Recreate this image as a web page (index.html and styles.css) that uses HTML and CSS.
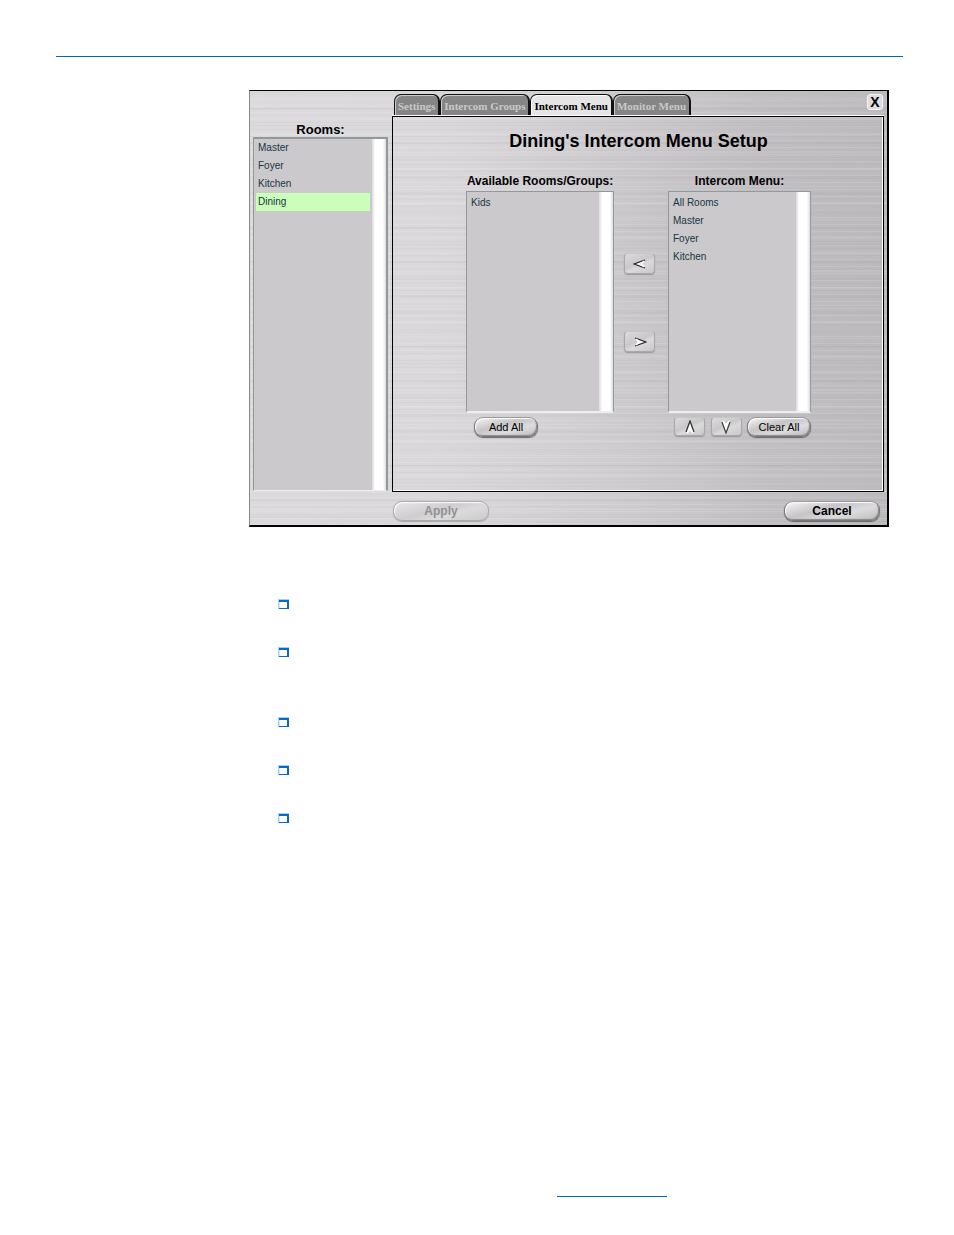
FILE: index.html
```html
<!DOCTYPE html>
<html lang="en">
<head>
<meta charset="utf-8">
<title>Intercom Menu Setup</title>
<link rel="stylesheet" href="styles.css">
</head>
<body>
<div class="page">
  <hr class="top-rule">
  <main class="content">
    <section class="window" aria-label="Intercom setup">
      <aside class="sidebar">
        <label class="list-label" for="rooms">Rooms:</label>
        <select class="listbox" id="rooms" size="4">
          <option>Master</option>
          <option>Foyer</option>
          <option>Kitchen</option>
          <option selected>Dining</option>
        </select>
      </aside>
      <div class="main">
        <div class="titlebar">
          <nav class="tabs">
            <button class="tab">Settings</button>
            <button class="tab">Intercom Groups</button>
            <button class="tab tab-active">Intercom Menu</button>
            <button class="tab">Monitor Menu</button>
          </nav>
          <button class="close">X</button>
        </div>
        <div class="panel">
          <h1 class="title">Dining's Intercom Menu Setup</h1>
          <div class="transfer">
            <div class="column">
              <label class="list-label" for="available">Available Rooms/Groups:</label>
              <select class="listbox" id="available" size="4">
                <option>Kids</option>
              </select>
              <div class="actions actions-left">
                <button class="pill">Add All</button>
              </div>
            </div>
            <div class="movers">
              <button class="arrow" aria-label="Move left">
                <svg width="14" height="10" viewBox="0 0 14 10"><path d="M12 1L9 5L12 9L3 5Z" fill="#fff"/><path d="M12 1L1 5L12 9" fill="none" stroke="#222" stroke-width="1.2"/><path d="M11 2L8 5L11 8" fill="none" stroke="#fff" stroke-width="1.5"/></svg>
              </button>
              <button class="arrow" aria-label="Move right">
                <svg width="14" height="10" viewBox="0 0 14 10"><path d="M2 1L5 5L2 9L11 5Z" fill="#fff"/><path d="M2 1L13 5L2 9" fill="none" stroke="#222" stroke-width="1.2"/><path d="M3 2L6 5L3 8" fill="none" stroke="#fff" stroke-width="1.5"/></svg>
              </button>
            </div>
            <div class="column">
              <label class="list-label" for="menu">Intercom Menu:</label>
              <select class="listbox" id="menu" size="4">
                <option>All Rooms</option>
                <option>Master</option>
                <option>Foyer</option>
                <option>Kitchen</option>
              </select>
              <div class="actions actions-right">
                <button class="arrow" aria-label="Move up">
                  <svg width="10" height="14" viewBox="0 0 10 14"><path d="M1 13L5 9L9 13L5 2Z" fill="#fff"/><path d="M1 12L5 1L9 12" fill="none" stroke="#333" stroke-width="1.3"/><path d="M5 6V10L2 13M5 9L8 13" fill="none" stroke="#fff" stroke-width="1.5"/></svg>
                </button>
                <button class="arrow" aria-label="Move down">
                  <svg width="10" height="14" viewBox="0 0 10 14"><path d="M1 1L5 5L9 1L5 12Z" fill="#fff"/><path d="M1 2L5 13L9 2" fill="none" stroke="#444" stroke-width="1.3"/><path d="M2 1L5 5V9M5 5L8 1" fill="none" stroke="#fff" stroke-width="1.5"/></svg>
                </button>
                <button class="pill">Clear All</button>
              </div>
            </div>
          </div>
        </div>
      </div>
      <div class="window-footer">
        <button class="pill pill-wide" disabled>Apply</button>
        <button class="pill pill-wide">Cancel</button>
      </div>
    </section>
    <ul class="notes">
      <li class="note"><svg class="box" viewBox="0 0 11 11"><path d="M0 0H11V10H0Z" fill="#a9cdf3"/><path d="M1 1H11V10H1Z" fill="#0b68d0"/><path d="M1 3H9V9H1Z" fill="#fff"/><path d="M1 3V9" stroke="#a9cdf3"/></svg></li>
      <li class="note note-long"><svg class="box" viewBox="0 0 11 11"><path d="M0 0H11V10H0Z" fill="#a9cdf3"/><path d="M1 1H11V10H1Z" fill="#0b68d0"/><path d="M1 3H9V9H1Z" fill="#fff"/><path d="M1 3V9" stroke="#a9cdf3"/></svg></li>
      <li class="note"><svg class="box" viewBox="0 0 11 11"><path d="M0 0H11V10H0Z" fill="#a9cdf3"/><path d="M1 1H11V10H1Z" fill="#0b68d0"/><path d="M1 3H9V9H1Z" fill="#fff"/><path d="M1 3V9" stroke="#a9cdf3"/></svg></li>
      <li class="note"><svg class="box" viewBox="0 0 11 11"><path d="M0 0H11V10H0Z" fill="#a9cdf3"/><path d="M1 1H11V10H1Z" fill="#0b68d0"/><path d="M1 3H9V9H1Z" fill="#fff"/><path d="M1 3V9" stroke="#a9cdf3"/></svg></li>
      <li class="note"><svg class="box" viewBox="0 0 11 11"><path d="M0 0H11V10H0Z" fill="#a9cdf3"/><path d="M1 1H11V10H1Z" fill="#0b68d0"/><path d="M1 3H9V9H1Z" fill="#fff"/><path d="M1 3V9" stroke="#a9cdf3"/></svg></li>
    </ul>
  </main>
  <footer class="page-footer"><hr class="footer-rule"></footer>
</div>
</body>
</html>
```

FILE: styles.css
```css
* { box-sizing: border-box; }

body {
  margin: 0;
  background: #fff;
  font-family: "Liberation Sans", Arial, sans-serif;
  color: #000;
}

button { font-family: inherit; color: inherit; }

.page {
  min-height: 100vh;
  display: flex;
  flex-direction: column;
  padding: 56px 51px 38px 56px;
}

.top-rule {
  width: 100%;
  height: 1px;
  margin: 0;
  border: 0;
  background: #0066cc;
}

.content {
  flex: 1;
  padding: 33px 14px 0 193px;
}

.window {
  display: grid;
  grid-template-columns: 139px 1fr;
  border: solid #000;
  border-width: 1px 2px 2px 1px;
  border-left-color: #888;
  padding: 3px 3px 0;
  background:
    repeating-linear-gradient(180deg, rgba(255,255,255,.1) 0 1px, transparent 1px 3px, rgba(90,80,90,.03) 3px 4px, transparent 4px 7px),
    repeating-linear-gradient(180deg, rgba(80,70,80,.03) 0 2px, transparent 2px 9px, rgba(255,255,255,.08) 9px 11px, transparent 11px 17px),
    radial-gradient(ellipse 40% 50% at 72% 38%, rgba(150,147,150,.12), transparent),
    linear-gradient(90deg, #dcdadc 0%, #dad8da 30%, #cfccd0 60%, #c4c1c4 80%, #bebbbe 100%);
}

.sidebar {
  display: flex;
  flex-direction: column;
  padding: 28px 4px 1px 0;
}

.list-label {
  font-size: 12px;
  line-height: 15px;
  font-weight: bold;
  text-align: center;
}

.sidebar .list-label { font-size: 13px; }

.listbox {
  appearance: none;
  flex: 1;
  width: 100%;
  margin: 0;
  padding: 0 16px 0 2px;
  border: solid #919a9b;
  border-width: 2px 2px 1px 1px;
  border-bottom-color: #eee;
  border-radius: 0;
  outline: 0;
  background: linear-gradient(90deg, #dcdadc, #fff 3px, #fff 11px, #ddd) right / 14px 100% no-repeat #cbc9cb;
  font: 10px "Liberation Sans", Arial, sans-serif;
  color: #173744;
}

.listbox option {
  height: 18px;
  padding: 3px 2px 0;
  color: #173744;
}

.listbox option:checked {
  background: linear-gradient(#c9ffb8, #c9ffb8);
  color: #173744;
}

.main {
  display: flex;
  flex-direction: column;
}

.titlebar {
  display: flex;
  justify-content: space-between;
  align-items: flex-start;
  padding-left: 2px;
}

.tabs { display: flex; }

.tab {
  height: 22px;
  padding: 0 3px;
  border: solid #111;
  border-width: 1px 2px 0 1px;
  border-radius: 7px 7px 0 0;
  background: #858585;
  box-shadow: inset 1px 1px 0 #ccc;
  font: bold 11px/20px "Liberation Serif", "Times New Roman", serif;
  color: #c9c9c9;
  white-space: nowrap;
}

.tab-active {
  background: #e6e5e6;
  box-shadow: inset 1px 1px 0 #fff;
  color: #000;
}

.close {
  width: 16px;
  height: 16px;
  margin-right: 1px;
  padding: 0;
  border: 1px solid #f5f5f5;
  border-radius: 3px;
  background: #dddcdf;
  font-size: 14px;
  line-height: 14px;
  font-weight: bold;
}

.panel {
  flex: 1;
  border: 1px solid #000;
  box-shadow: inset -1px -1px 0 #fff, 0 -1px 0 #fff;
  padding: 14px 72px 54px 73px;
}

.title {
  margin: 0 0 23px;
  font-size: 18px;
  line-height: 20px;
  text-align: center;
}

.transfer {
  display: grid;
  grid-template-columns: 148fr 54px 143fr;
}

.column {
  display: flex;
  flex-direction: column;
}

.column .list-label {
  height: 17px;
  white-space: nowrap;
}

.column .listbox {
  flex: none;
  height: 222px;
  padding-top: 2px;
  border-width: 1px 1px 2px 1px;
}

.movers {
  display: flex;
  flex-direction: column;
  gap: 57px;
  padding: 79px 0 0 10px;
}

.arrow {
  display: grid;
  place-items: center;
  width: 31px;
  height: 21px;
  padding: 0;
  border: 1px solid #a9a7a9;
  border-top-color: #c8c6c8;
  border-radius: 4px;
  background: linear-gradient(155deg, #dddcdd, #cac8ca 45%, #dbdadb 60%, #c9c7c9);
  box-shadow: 0 1px 1px #999;
}

.actions .arrow { height: 19px; }

.actions {
  display: flex;
  padding-top: 4px;
}

.actions-left { padding-left: 8px; }

.actions-right {
  justify-content: space-between;
  padding-left: 6px;
}

.pill {
  height: 20px;
  padding: 0 8px;
  border: 1px solid #777;
  border-top-color: #999;
  border-radius: 9px;
  background: linear-gradient(165deg, #f1f0f1 5%, #c6c4c6 40%, #dddcdd 65%, #bdbbbd);
  box-shadow: inset 1px 1px 1px #fff, inset -1px -1px 1px #888, 0 1px 1px #666;
  font-size: 11px;
  line-height: 18px;
  white-space: nowrap;
}

.actions .pill { width: 64px; }

.window-footer {
  grid-column: 1 / -1;
  display: flex;
  justify-content: space-between;
  padding: 9px 4px 4px 140px;
}

.pill-wide {
  width: 96px;
  font-size: 12px;
  font-weight: bold;
}

.pill:disabled {
  border-color: #aaa;
  background: linear-gradient(165deg, #e8e7e8, #cfcdcf 45%, #dcdbdc 65%, #cbc9cb);
  box-shadow: inset 1px 1px 1px #fff, 0 1px 1px #aaa;
  color: #929092;
}

.notes {
  margin: 0;
  padding: 72px 0 0 29px;
  list-style: none;
}

.note { height: 48px; }

.note-long { height: 70px; }

.box {
  display: block;
  width: 11px;
  height: 11px;
}

.page-footer { padding-left: 501px; }

.footer-rule {
  width: 110px;
  height: 1px;
  margin: 0;
  border: 0;
  background: #0066cc;
}
```
